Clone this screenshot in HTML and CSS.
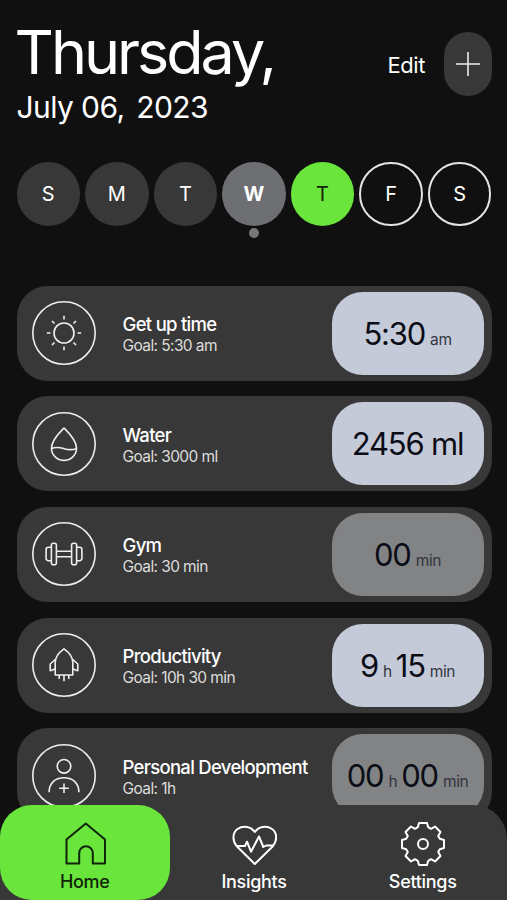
FILE: index.html
```
<!DOCTYPE html>
<html lang="en">
<head>
  <meta charset="UTF-8" />
  <meta name="viewport" content="width=device-width, initial-scale=1.0" />
  <title>Daily Goals</title>
  <link rel="stylesheet" href="styles.css">
</head>
<body>
  <header class="header">
    <div>
      <h1 class="weekday">Thursday,</h1>
      <div class="date">July 06, <span class="year">2023</span></div>
    </div>
    <div class="actions">
      <a class="edit">Edit</a>
      <button class="add" aria-label="Add">
        <svg width="24" height="24" viewBox="0 0 24 24"><path d="M12 0v24M0 12h24" /></svg>
      </button>
    </div>
  </header>

  <div class="week">
    <div class="day">S</div>
    <div class="day">M</div>
    <div class="day">T</div>
    <div class="day selected">W</div>
    <div class="day today">T</div>
    <div class="day future">F</div>
    <div class="day future">S</div>
  </div>

  <main class="goals">
    <div class="card">
      <svg class="icon" viewBox="-32 -32 64 64">
        <circle r="31.2" />
        <circle r="10" />
        <path d="M0-17.2v3.6M0 17.2v-3.6M-17.2 0h3.6M17.2 0h-3.6M-12-12l2.5 2.5M12-12l-2.5 2.5M-12 12l2.5-2.5M12 12l-2.5-2.5" />
      </svg>
      <div class="info">
        <div class="title">Get up time</div>
        <div class="goal">Goal: 5:30 am</div>
      </div>
      <div class="value">5:30<small>am</small></div>
    </div>

    <div class="card">
      <svg class="icon" viewBox="-32 -32 64 64">
        <circle r="31.2" />
        <path d="M0-16C-4-12-12.5-4-12.5 4.2a12.5 12.2 0 0 0 25 0C12.5-4 4-12 0-16z" />
        <path d="M-12.4 4.4C-7 2.5-4 3.5 0 4.7S8 6 12.4 4.7" />
      </svg>
      <div class="info">
        <div class="title">Water</div>
        <div class="goal">Goal: 3000 ml</div>
      </div>
      <div class="value">2456 ml</div>
    </div>

    <div class="card">
      <svg class="icon" viewBox="-32 -32 64 64">
        <circle r="31.2" />
        <rect x="-12.6" y="-10.7" width="5" height="21.4" rx="2" />
        <rect x="7.6" y="-10.7" width="5" height="21.4" rx="2" />
        <path d="M-12.6-6.7h-3a2.3 2.3 0 0 0-2.3 2.3v8.8a2.3 2.3 0 0 0 2.3 2.3h3M12.6-6.7h3a2.3 2.3 0 0 1 2.3 2.3v8.8a2.3 2.3 0 0 1-2.3 2.3h-3M-7.6-2.7H7.6M-7.6 2.7H7.6" />
      </svg>
      <div class="info">
        <div class="title">Gym</div>
        <div class="goal">Goal: 30 min</div>
      </div>
      <div class="value empty">00<small>min</small></div>
    </div>

    <div class="card">
      <svg class="icon" viewBox="-32 -32 64 64">
        <circle r="31.2" />
        <path d="M0-16.2C-4.5-13-8.8-9-8.8-2.5V10H8.8V-2.5C8.8-9 4.5-13 0-16.2z" />
        <path d="M-8.800-5.500L-13.800-1V5.800L-8.800 4M8.800-5.500L13.800-1V5.800L8.800 4M-4.800 10v4M0 10v6.300M4.800 10v4" />
      </svg>
      <div class="info">
        <div class="title">Productivity</div>
        <div class="goal">Goal: 10h 30 min</div>
      </div>
      <div class="value">9<small>h</small>15<small>min</small></div>
    </div>

    <div class="card">
      <svg class="icon" viewBox="-32 -32 64 64">
        <circle r="31.2" />
        <circle cy="-9.7" r="6.8" />
        <path d="M-14.9 16.3c0-9 6-14.5 14.9-14.5s14.9 5.5 14.9 14.5M0 7.500v9.600M-4.800 12.300h9.600" />
      </svg>
      <div class="info">
        <div class="title">Personal Development</div>
        <div class="goal">Goal: 1h</div>
      </div>
      <div class="value empty">00<small>h</small>00<small>min</small></div>
    </div>
  </main>

  <nav class="tabs">
    <a class="tab active">
      <svg width="46" height="46" viewBox="0 0 46 46"><path d="M23.800 2.500L4.500 18.500V42.500H17.200V32a6.800 6.800 0 0 1 13.600 0V42.500H43V18.500z" /></svg>
      <span>Home</span>
    </a>
    <a class="tab">
      <svg width="46" height="46" viewBox="0 0 46 46">
        <path d="M23.800 43L6 25.500C0.500 19 2 11 6.500 8 12.500 4 20 5.500 23.800 11 27.600 5.500 35.100 4 41.100 8 45.600 11 47.100 19 41.600 25.500z" />
        <path d="M5.500 25H14l2-4.300 4 10 8-15.200 4.300 10.500 2.700-1.500h7" />
      </svg>
      <span>Insights</span>
    </a>
    <a class="tab">
      <svg width="46" height="46" viewBox="-23 -23 46 46">
        <circle r="5" />
        <path d="M-4-21H4L5.200-16.800 8-15.200 12-17.500 17.500-12 15.200-8 16.800-5.200 21-4V4L16.800 5.200 15.200 8 17.500 12 12 17.500 8 15.200 5.200 16.800 4 21H-4L-5.200 16.800-8 15.200-12 17.500-17.500 12-15.200 8-16.800 5.200-21 4V-4L-16.800-5.200-15.200-8-17.500-12-12-17.500-8-15.200-5.200-16.800z" />
      </svg>
      <span>Settings</span>
    </a>
  </nav>
</body>
</html>
```
FILE: styles.css
```
* {
  box-sizing: border-box;
}
body {
  margin: 0;
  height: 900px;
  overflow: hidden;
  padding: 0 15.5px 0 16.5px;
  font-family: 'Inter', sans-serif;
  background-color: #101010;
  color: #ffffff;
}
svg {
  fill: none;
  stroke: currentColor;
  stroke-width: 1.6;
  stroke-linejoin: round;
}
.header {
  display: flex;
  justify-content: space-between;
  height: 162px;
  padding-top: 22px;
}
.weekday {
  margin: 0 0 0 -2px;
  font-size: 61px;
  line-height: 60px;
  font-weight: 400;
  letter-spacing: -3px;
}
.date {
  font-size: 30px;
  line-height: 50px;
  letter-spacing: -0.6px;
}
.year {
  margin-left: 4px;
}
.actions {
  display: flex;
  align-items: center;
  gap: 18.5px;
  height: 64px;
  margin-top: 10px;
}
.edit {
  font-size: 22px;
  line-height: 28px;
  letter-spacing: -0.4px;
  padding-top: 2px;
}
.add {
  display: flex;
  align-items: center;
  justify-content: center;
  width: 48px;
  height: 64px;
  padding: 0;
  border: none;
  border-radius: 24px;
  background-color: #383838;
  color: #eeeeee;
}
.week {
  display: flex;
  justify-content: space-between;
  height: 123.5px;
}
.day {
  position: relative;
  width: 63.5px;
  height: 63.5px;
  border-radius: 50%;
  background-color: #383838;
  font-size: 20px;
  line-height: 65px;
  text-align: center;
}
.day.selected {
  background-color: #6e6f72;
  font-weight: 700;
}
.day.selected::after {
  content: "";
  position: absolute;
  left: 27px;
  top: 66px;
  width: 10px;
  height: 10px;
  border-radius: 50%;
  background-color: #77787a;
}
.day.today {
  background-color: #69e53b;
  color: #10240a;
}
.day.future {
  border: 2px solid #e4e4e4;
  background: none;
  line-height: 61px;
}
.goals {
  display: flex;
  flex-direction: column;
  gap: 15.7px;
}
.card {
  display: flex;
  align-items: center;
  flex-shrink: 0;
  height: 95px;
  padding: 0 8px 0 15.5px;
  border-radius: 31px;
  background-color: #383838;
}
.icon {
  width: 64px;
  height: 64px;
  color: #eeeeee;
}
.info {
  flex: 1;
  padding: 3px 0 0 26.5px;
  white-space: nowrap;
}
.title {
  font-size: 18.5px;
  line-height: 22px;
  font-weight: 500;
  letter-spacing: -0.7px;
}
.goal {
  font-size: 15.5px;
  line-height: 21px;
  letter-spacing: -0.6px;
  color: #dddddd;
}
.value {
  display: flex;
  align-items: baseline;
  justify-content: center;
  width: 152px;
  height: 83px;
  border-radius: 31px;
  background-color: #c5cad9;
  color: #0b0d16;
  font-size: 31px;
  line-height: 83px;
  letter-spacing: -1.2px;
  white-space: pre;
}
.value small {
  margin: 0 4px 0 5px;
  font-size: 15.5px;
  letter-spacing: -0.4px;
  color: #33363f;
}
.value small:last-child {
  margin-right: 0;
}
.value.empty {
  background-color: #828385;
}
.tabs {
  position: absolute;
  left: 0;
  right: 0;
  bottom: 0;
  display: grid;
  grid-template-columns: 169.5px 169px 1fr;
  height: 95px;
  border-radius: 34px 34px 0 0;
  background-color: #383838;
}
.tab {
  display: flex;
  flex-direction: column;
  align-items: center;
  padding-top: 16px;
  font-size: 18px;
  line-height: 30px;
  font-weight: 500;
  letter-spacing: -0.3px;
}
.tab svg {
  stroke-width: 2;
}
.tab.active {
  border-radius: 32px;
  background-color: #69e53b;
  color: #10240a;
}
```
